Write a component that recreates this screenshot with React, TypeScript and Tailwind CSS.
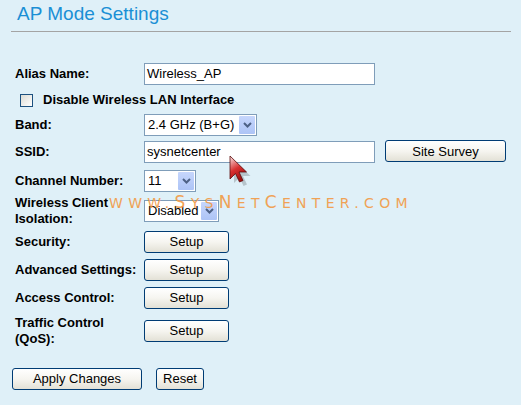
import React from "react";

const font = { fontFamily: '"Liberation Sans", Arial, sans-serif' };

function Label({ children }: { children: React.ReactNode }) {
  return <div className="w-[129px] shrink-0 text-[13px] font-bold leading-[16px] text-black">{children}</div>;
}

function TextBox({ value }: { value: string }) {
  return (
    <div className="flex h-[22px] w-[231px] items-center border border-[#7f9db9] bg-white pl-[2px] text-[13px] text-black">
      {value}
    </div>
  );
}

function Select({ value, width }: { value: string; width: string }) {
  return (
    <div className={`flex h-[22px] items-center justify-between border border-[#7f9db9] bg-white p-[1px] pl-[3px] text-[13px] text-black ${width}`}>
      <span>{value}</span>
      <span className="flex h-full w-[16px] items-center justify-center rounded-[1px] bg-gradient-to-b from-[#c6d6fc] to-[#adc4f6]">
        <svg width="9" height="6" viewBox="0 0 9 6">
          <path d="M1 1 L4.5 4.5 L8 1" fill="none" stroke="#4d6185" strokeWidth="2" />
        </svg>
      </span>
    </div>
  );
}

function Button({ children, width }: { children: React.ReactNode; width: string }) {
  return (
    <button
      className={`h-[22px] rounded-[3px] border border-[#003c74] bg-gradient-to-b from-white via-[#f6f5f0] to-[#e3e1d6] text-[13px] text-black ${width}`}
    >
      {children}
    </button>
  );
}

function Row({ h, children }: { h: string; children: React.ReactNode }) {
  return <div className={`flex items-center ${h}`}>{children}</div>;
}

export default function App() {
  return (
    <div className="relative h-[405px] w-[521px] overflow-hidden bg-[#dff0f8]" style={font}>
      <div className="px-[11px] pt-[4px]">
        <h1 className="pl-[6px] text-[19px] leading-[19px] text-[#1a8fd5]">AP Mode Settings</h1>
        <div className="mt-[8px] h-px w-[500px] bg-[#a4a4a4]" />
      </div>

      <div className="mt-[29px] px-[15px]">
        <Row h="h-[26px]">
          <Label>Alias Name:</Label>
          <TextBox value="Wireless_AP" />
        </Row>
        <Row h="h-[26px]">
          <span className="ml-[5px] h-[13px] w-[13px] border border-[#1c5180] bg-gradient-to-br from-[#dcdcd5] to-white" />
          <span className="ml-[10px] text-[13px] font-bold">Disable Wireless LAN Interface</span>
        </Row>
        <Row h="h-[24px]">
          <Label>Band:</Label>
          <Select value="2.4 GHz (B+G)" width="w-[113px]" />
        </Row>
        <Row h="h-[30px]">
          <Label>SSID:</Label>
          <TextBox value="sysnetcenter" />
          <div className="ml-[10px] -mt-[3px]">
            <Button width="w-[121px]">Site Survey</Button>
          </div>
        </Row>
        <Row h="h-[28px]">
          <Label>Channel Number:</Label>
          <Select value="11" width="w-[52px]" />
        </Row>
        <Row h="h-[32px]">
          <Label>
            Wireless Client
            <br />
            Isolation:
          </Label>
          <Select value="Disabled" width="w-[75px]" />
        </Row>
        <Row h="h-[30px]">
          <Label>Security:</Label>
          <Button width="w-[85px]">Setup</Button>
        </Row>
        <Row h="h-[26px]">
          <Label>Advanced Settings:</Label>
          <Button width="w-[85px]">Setup</Button>
        </Row>
        <Row h="h-[30px]">
          <Label>Access Control:</Label>
          <Button width="w-[85px]">Setup</Button>
        </Row>
        <Row h="h-[36px]">
          <Label>
            Traffic Control
            <br />
            (QoS):
          </Label>
          <Button width="w-[85px]">Setup</Button>
        </Row>
        <div className="-ml-[3px] mt-[19px] flex gap-[14px]">
          <Button width="w-[130px]">Apply Changes</Button>
          <Button width="w-[48px]">Reset</Button>
        </div>
      </div>

      {/* watermark */}
      <div
        className="pointer-events-none absolute left-[109px] top-[192px] flex items-baseline whitespace-nowrap text-[14px] leading-[20px] tracking-[5.3px] text-[#f29a45] opacity-90"
        style={{ fontFamily: '"DejaVu Sans", sans-serif' }}
      >
        <span>WWW.</span>
        <span className="text-[17px]">S</span>
        <span>YS</span>
        <span className="text-[17px]">N</span>
        <span>ET</span>
        <span className="text-[17px]">C</span>
        <span>ENTER.COM</span>
      </div>

      {/* mouse pointer */}
      <svg className="pointer-events-none absolute left-[229px] top-[155px]" width="22" height="32" viewBox="0 0 22 32">
        <defs>
          <linearGradient id="cur" x1="0" y1="0" x2="0.4" y2="1">
            <stop offset="0" stopColor="#fbe9e9" />
            <stop offset="0.55" stopColor="#d83030" />
            <stop offset="1" stopColor="#a01010" />
          </linearGradient>
        </defs>
        <path d="M3 3 L3 26 L8.5 20.5 L12.5 29 L16 27.5 L12 19 L19.5 19 Z" fill="#000" opacity="0.18" transform="translate(2 2)" />
        <path d="M1 1 L1 24 L6.5 18.5 L10.5 27 L14 25.5 L10 17 L17.5 17 Z" fill="url(#cur)" stroke="#5a0a0a" strokeWidth="0.8" />
      </svg>
    </div>
  );
}
